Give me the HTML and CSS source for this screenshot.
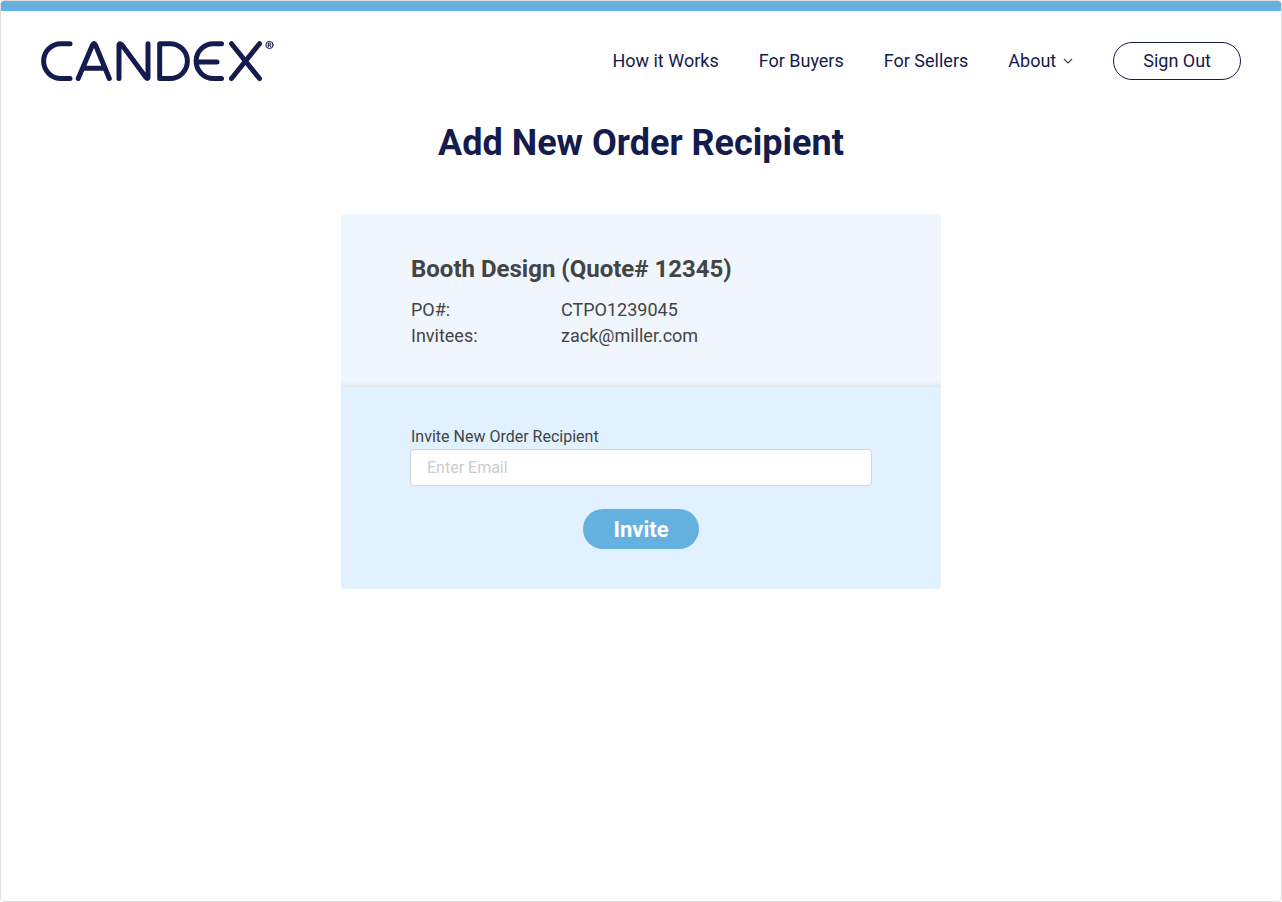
FILE: index.html
```html
<!DOCTYPE html>
<html lang="en">
<head>
<meta charset="utf-8">
<meta name="viewport" content="width=device-width, initial-scale=1">
<title>Candex – Add New Order Recipient</title>
<link rel="stylesheet" href="styles.css">
</head>
<body>
<div class="page">
  <header class="header">
    <a class="logo" href="#" aria-label="Candex">
      <svg width="234" height="42" viewBox="40 40 234 42" fill="none" stroke="currentColor" stroke-width="5" stroke-linecap="round" stroke-linejoin="round">
        <path d="M70 43.700H61a17.400 17.400 0 0 0 0 34.800H70"/>
        <path d="M78.200 78.500L92.500 45Q94 42 95.500 45L109.300 78.500M84 68.300H104"/>
        <path d="M119 78.500V45Q119.500 42.300 122 45L146 77.500Q148 79.500 148 77V43.700"/>
        <path d="M159.700 43.700H170a17.400 17.400 0 0 1 0 34.800H159.700Z"/>
        <path d="M221.500 43.700H213.500a17.400 17.400 0 0 0 0 34.800H221.500M197 62H217"/>
        <path d="M231.500 43.700L259.500 78.500M259.500 43.700L231.500 78.500"/>
        <g stroke-width="1">
          <circle cx="269.500" cy="45" r="3.600"/>
          <path d="M268.300 47V43H269.700a1.100 1.100 0 0 1 0 2.200H268.300M269.800 45.200L271 47"/>
        </g>
      </svg>
    </a>
    <nav class="nav">
      <a href="#">How it Works</a>
      <a href="#">For Buyers</a>
      <a href="#">For Sellers</a>
      <a class="nav-menu" href="#">About
        <svg width="10" height="6" viewBox="0 0 10 6" fill="none" stroke="#444" stroke-width="1.200"><path d="M1 1L5 5L9 1"/></svg>
      </a>
      <button class="sign-out" type="button">Sign Out</button>
    </nav>
  </header>
  <main class="main">
    <h1 class="title">Add New Order Recipient</h1>
    <div class="card">
      <section class="summary">
        <h2 class="order-name">Booth Design (Quote# 12345)</h2>
        <dl class="details">
          <dt>PO#:</dt><dd>CTPO1239045</dd>
          <dt>Invitees:</dt><dd>zack@miller.com</dd>
        </dl>
      </section>
      <form class="invite">
        <label class="label" for="email">Invite New Order Recipient</label>
        <input class="email" id="email" type="email" placeholder="Enter Email">
        <button class="submit" type="button">Invite</button>
      </form>
    </div>
  </main>
</div>
</body>
</html>
```
FILE: styles.css
```css
* {
  box-sizing: border-box;
}

body {
  margin: 0;
  background: #fff;
  color: #444;
  font-family: Roboto, "Liberation Sans", sans-serif;
  font-size: 18px;
}

button,
input {
  font: inherit;
}

.page {
  min-height: 100vh;
  border: 1px solid #ddd;
  border-radius: 4px;
  overflow: hidden;
}

.header {
  display: flex;
  align-items: center;
  justify-content: space-between;
  gap: 40px;
  padding: 29px 40px 0 39px;
  border-top: 10px solid #64b1e0;
  color: #141b4d;
}

.logo {
  display: flex;
  flex: none;
  color: inherit;
}

.nav {
  display: flex;
  align-items: center;
  gap: 40px;
  line-height: 24px;
  white-space: nowrap;
}

.nav a {
  color: inherit;
  text-decoration: none;
}

.nav .nav-menu {
  display: flex;
  align-items: center;
  gap: 7px;
}

.sign-out {
  height: 38px;
  padding: 0 29px;
  border: 1px solid #141b4d;
  border-radius: 19px;
  background: none;
  color: inherit;
}

.main {
  display: flex;
  flex-direction: column;
  align-items: center;
  padding: 39px 20px 40px;
}

.title {
  margin: 0 0 49px;
  color: #141b4d;
  font-size: 36px;
  font-weight: 700;
  line-height: 44px;
  text-align: center;
}

.card {
  width: 100%;
  max-width: 600px;
  border-radius: 4px;
  overflow: hidden;
}

.summary {
  padding: 39px 70px 38px;
  background: #eff6fd;
}

.order-name {
  margin: 0 0 12px;
  font-size: 24px;
  font-weight: 700;
  line-height: 32px;
}

.details {
  display: grid;
  grid-template-columns: 150px 1fr;
  margin: 0;
  line-height: 26px;
}

.details dd {
  margin: 0;
}

.invite {
  display: flex;
  flex-direction: column;
  padding: 40px 70px;
  background: #e1f1ff;
  box-shadow: 0 0 6px 1px rgba(80, 60, 80, 0.15);
}

.label {
  font-size: 16px;
  line-height: 20px;
}

.email {
  height: 37px;
  margin: 2px -1px 23px;
  padding: 0 16px;
  border: 1px solid #d4d4d4;
  border-radius: 4px;
  background: #fff;
  color: #444;
  font-size: 16px;
}

.email::placeholder {
  color: #ccc;
  opacity: 1;
}

.submit {
  align-self: center;
  height: 40px;
  padding: 0 30px;
  border: 0;
  border-radius: 20px;
  background: #64b1e0;
  color: #fff;
  font-size: 22px;
  font-weight: 700;
}
```
